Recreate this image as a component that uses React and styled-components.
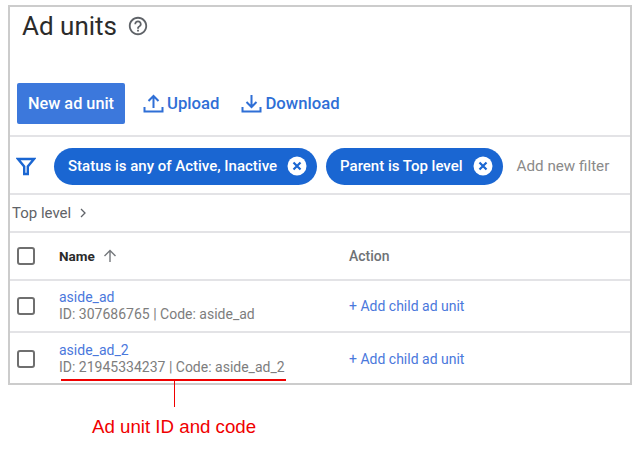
import styled, { createGlobalStyle } from 'styled-components';

const GlobalStyle = createGlobalStyle`
  html, body {
    margin: 0;
    padding: 0;
    background: #fff;
  }
  body {
    font-family: Roboto, "Liberation Sans", sans-serif;
    -webkit-font-smoothing: antialiased;
  }
`;

const Page = styled.div`
  position: relative;
  width: 636px;
  height: 455px;
  padding: 5px 4px 0 8px;
  box-sizing: border-box;
  overflow: hidden;
`;

const Frame = styled.div`
  border: 2px solid #cccccc;
  box-sizing: border-box;
  height: 380px;
  display: flex;
  flex-direction: column;
`;

const Header = styled.div`
  height: 130px;
  box-sizing: border-box;
  padding: 2px 0 0 12px;
  display: flex;
  flex-direction: column;
  border-bottom: 2px solid #e3e3e6;
`;

const TitleRow = styled.div`
  display: flex;
  align-items: center;
  gap: 10px;
  height: 34px;
`;

const Title = styled.h1`
  margin: 0;
  font-size: 26px;
  font-weight: 400;
  color: #2b2b2b;
`;

const Toolbar = styled.div`
  display: flex;
  align-items: center;
  margin: 40px 0 0 -5px;
`;

const PrimaryButton = styled.div`
  width: 108px;
  height: 41px;
  display: flex;
  align-items: center;
  justify-content: center;
  background: #3c78dc;
  border-radius: 2px;
  color: #fff;
  font-size: 16.300px;
  font-weight: 500;
`;

const ToolButton = styled.div`
  display: flex;
  align-items: center;
  gap: 3px;
  margin-left: ${(p) => p.$gap}px;
  color: #2f6fd6;
  font-size: 16.700px;
  font-weight: 500;
`;

const FilterRow = styled.div`
  height: 58px;
  box-sizing: border-box;
  display: flex;
  align-items: center;
  padding: 2px 0 0 6px;
  border-bottom: 2px solid #e3e3e6;
`;

const Chip = styled.div`
  height: 37px;
  box-sizing: border-box;
  display: flex;
  align-items: center;
  gap: 10px;
  margin-left: ${(p) => p.$gap}px;
  padding: 0 10px 0 14px;
  border-radius: 19px;
  background: #1a66d2;
  color: #fff;
  font-size: 15px;
  font-weight: 500;
  white-space: nowrap;
`;

const AddFilter = styled.div`
  margin-left: 14px;
  color: #8a8a8a;
  font-size: 15.200px;
  white-space: nowrap;
`;

const Breadcrumb = styled.div`
  height: 38px;
  box-sizing: border-box;
  display: flex;
  align-items: center;
  gap: 8px;
  padding: 0 0 0 2px;
  border-bottom: 2px solid #e3e3e6;
  color: #5f6368;
  font-size: 15px;
`;

const Row = styled.div`
  height: ${(p) => p.$height}px;
  box-sizing: border-box;
  display: grid;
  grid-template-columns: 42px 290px 1fr;
  align-items: center;
  padding-left: 7px;
  padding-top: ${(p) => (p.$last ? '2px' : '0')};
  border-bottom: ${(p) => (p.$last ? 'none' : '2px solid #e3e3e6')};
`;

const Checkbox = styled.div`
  width: 18px;
  height: 18px;
  box-sizing: border-box;
  border: 2px solid #6f6f6f;
  border-radius: 3px;
`;

const NameHead = styled.div`
  display: flex;
  align-items: center;
  gap: 8px;
  color: #2b2b2b;
  font-size: 13.500px;
  font-weight: 700;
`;

const ActionHead = styled.div`
  color: #6f7276;
  font-size: 14px;
  font-weight: 500;
`;

const NameLink = styled.div`
  color: #4a78dc;
  font-size: 14px;
  line-height: 17px;
`;

const Meta = styled.div`
  color: #7d7d7d;
  font-size: 14px;
  line-height: 17px;
`;

const AddChild = styled.div`
  color: #4a78dc;
  font-size: 14px;
`;

const Underline = styled.div`
  position: absolute;
  left: 61px;
  top: 379px;
  width: 225px;
  height: 2px;
  background: #f00000;
`;

const Leader = styled.div`
  position: absolute;
  left: 174px;
  top: 379px;
  width: 1px;
  height: 28px;
  background: #f00000;
`;

const Callout = styled.div`
  position: absolute;
  left: 92px;
  top: 417px;
  color: #f00000;
  font-family: "Liberation Sans", Arial, sans-serif;
  font-size: 18.700px;
  line-height: 20px;
  white-space: nowrap;
`;

const HelpIcon = () => (
  <svg width="22" height="22" viewBox="0 0 24 24" fill="#5f6368">
    <path d="M11 18h2v-2h-2v2zm1-16C6.48 2 2 6.48 2 12s4.48 10 10 10 10-4.48 10-10S17.52 2 12 2zm0 18c-4.41 0-8-3.59-8-8s3.59-8 8-8 8 3.59 8 8-3.59 8-8 8zm0-14c-2.21 0-4 1.79-4 4h2c0-1.1.9-2 2-2s2 .9 2 2c0 2-3 1.75-3 5h2c0-2.25 3-2.5 3-5 0-2.21-1.79-4-4-4z" />
  </svg>
);

const UploadIcon = () => (
  <svg width="21" height="21" viewBox="0 0 21 21" fill="none" stroke="#2f6fd6" strokeWidth="2">
    <path d="M10.500 15V3M5.500 8l5-5 5 5M1.500 14v4.500h18V14" />
  </svg>
);

const DownloadIcon = () => (
  <svg width="21" height="21" viewBox="0 0 21 21" fill="none" stroke="#2f6fd6" strokeWidth="2">
    <path d="M10.500 2v12M5.500 9l5 5 5-5M1.500 14v4.500h18V14" />
  </svg>
);

const FilterIcon = () => (
  <svg width="20" height="20" viewBox="0 0 20 20" fill="none" stroke="#1a66d2" strokeWidth="2.400">
    <path d="M2 3h16l-6.200 7.500V18H8.200v-7.500z" />
  </svg>
);

const CloseIcon = () => (
  <svg width="20" height="20" viewBox="0 0 20 20">
    <circle cx="10" cy="10" r="9.500" fill="#fff" />
    <path d="M6.500 6.500l7 7M13.500 6.500l-7 7" stroke="#1a66d2" strokeWidth="2.200" />
  </svg>
);

const ChevronIcon = () => (
  <svg width="8" height="10" viewBox="0 0 8 10" fill="none" stroke="#5f6368" strokeWidth="1.300">
    <path d="M2 1l4 4-4 4" />
  </svg>
);

const ArrowUpIcon = () => (
  <svg width="14" height="14" viewBox="0 0 14 14" fill="none" stroke="#75787c" strokeWidth="1.400">
    <path d="M7 13V1.500M1.500 7L7 1.500 12.500 7" />
  </svg>
);

const units = [
  { name: 'aside_ad', meta: 'ID: 307686765 | Code: aside_ad', height: 52 },
  { name: 'aside_ad_2', meta: 'ID: 21945334237 | Code: aside_ad_2', height: 50, last: true },
];

const App = () => {
  return (
    <Page>
      <GlobalStyle />
      <Frame>
        <Header>
          <TitleRow>
            <Title>Ad units</Title>
            <HelpIcon />
          </TitleRow>
          <Toolbar>
            <PrimaryButton>New ad unit</PrimaryButton>
            <ToolButton $gap={18}>
              <UploadIcon />
              Upload
            </ToolButton>
            <ToolButton $gap={22}>
              <DownloadIcon />
              Download
            </ToolButton>
          </Toolbar>
        </Header>
        <FilterRow>
          <FilterIcon />
          <Chip $gap={18}>
            Status is any of Active, Inactive
            <CloseIcon />
          </Chip>
          <Chip $gap={9}>
            Parent is Top level
            <CloseIcon />
          </Chip>
          <AddFilter>Add new filter</AddFilter>
        </FilterRow>
        <Breadcrumb>
          Top level
          <ChevronIcon />
        </Breadcrumb>
        <Row $height={48}>
          <Checkbox />
          <NameHead>
            Name
            <ArrowUpIcon />
          </NameHead>
          <ActionHead>Action</ActionHead>
        </Row>
        {units.map((unit) => (
          <Row key={unit.name} $height={unit.height} $last={unit.last}>
            <Checkbox />
            <div>
              <NameLink>{unit.name}</NameLink>
              <Meta>{unit.meta}</Meta>
            </div>
            <AddChild>+ Add child ad unit</AddChild>
          </Row>
        ))}
      </Frame>
      <Underline />
      <Leader />
      <Callout>Ad unit ID and code</Callout>
    </Page>
  );
};

export default App;
